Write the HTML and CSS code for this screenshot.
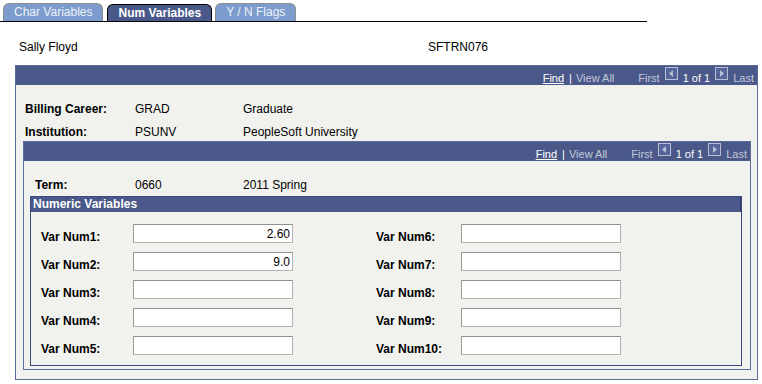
FILE: index.html
```html
<!DOCTYPE html>
<html lang="en">
<head>
    <meta charset="UTF-8">
    <title>Num Variables</title>
    <link rel="stylesheet" href="styles.css">
</head>
<body>
    <div class="tabs">
        <span class="tab">Char Variables</span>
        <span class="tab active">Num Variables</span>
        <span class="tab">Y / N Flags</span>
    </div>

    <div class="page-head">
        <span class="student">Sally Floyd</span>
        <span class="oprid">SFTRN076</span>
    </div>

    <div class="scroll outer">
        <div class="nav-bar">
            <a class="find">Find</a>
            <span class="sep">|</span>
            <span class="dim">View All</span>
            <span class="dim first">First</span>
            <svg class="arrow" width="13" height="13" viewBox="0 0 13 13">
                <rect x="0.5" y="0.5" width="12" height="12" fill="#55649a" stroke="#b9bfd3"/>
                <polygon points="8,3 8,10 4,6.5" fill="#b9bfd3"/>
            </svg>
            <span class="count">1 of 1</span>
            <svg class="arrow" width="13" height="13" viewBox="0 0 13 13">
                <rect x="0.5" y="0.5" width="12" height="12" fill="#55649a" stroke="#b9bfd3"/>
                <polygon points="5,3 5,10 9,6.5" fill="#b9bfd3"/>
            </svg>
            <span class="dim">Last</span>
        </div>

        <div class="info-row">
            <span class="label">Billing Career:</span>
            <span>GRAD</span>
            <span>Graduate</span>
        </div>
        <div class="info-row">
            <span class="label">Institution:</span>
            <span>PSUNV</span>
            <span>PeopleSoft University</span>
        </div>

        <div class="scroll inner">
            <div class="nav-bar">
                <a class="find">Find</a>
                <span class="sep">|</span>
                <span class="dim">View All</span>
                <span class="dim first">First</span>
                <svg class="arrow" width="13" height="13" viewBox="0 0 13 13">
                    <rect x="0.5" y="0.5" width="12" height="12" fill="#55649a" stroke="#b9bfd3"/>
                    <polygon points="8,3 8,10 4,6.5" fill="#b9bfd3"/>
                </svg>
                <span class="count">1 of 1</span>
                <svg class="arrow" width="13" height="13" viewBox="0 0 13 13">
                    <rect x="0.5" y="0.5" width="12" height="12" fill="#55649a" stroke="#b9bfd3"/>
                    <polygon points="5,3 5,10 9,6.5" fill="#b9bfd3"/>
                </svg>
                <span class="dim">Last</span>
            </div>

            <div class="info-row term">
                <span class="label">Term:</span>
                <span>0660</span>
                <span>2011 Spring</span>
            </div>

            <div class="group">
                <div class="group-title">Numeric Variables</div>
                <div class="num-grid">
                    <label class="label" for="num1">Var Num1:</label>
                    <input type="text" id="num1" value="2.60">
                    <label class="label" for="num6">Var Num6:</label>
                    <input type="text" id="num6">

                    <label class="label" for="num2">Var Num2:</label>
                    <input type="text" id="num2" value="9.0">
                    <label class="label" for="num7">Var Num7:</label>
                    <input type="text" id="num7">

                    <label class="label" for="num3">Var Num3:</label>
                    <input type="text" id="num3">
                    <label class="label" for="num8">Var Num8:</label>
                    <input type="text" id="num8">

                    <label class="label" for="num4">Var Num4:</label>
                    <input type="text" id="num4">
                    <label class="label" for="num9">Var Num9:</label>
                    <input type="text" id="num9">

                    <label class="label" for="num5">Var Num5:</label>
                    <input type="text" id="num5">
                    <label class="label" for="num10">Var Num10:</label>
                    <input type="text" id="num10">
                </div>
            </div>
        </div>
    </div>
</body>
</html>
```

FILE: styles.css
```css
body {
    font-family: "Liberation Sans", Arial, sans-serif;
    font-size: 12px;
    line-height: 14px;
    color: #000;
    margin: 0;
    padding: 0;
    background-color: #fff;
}

/* tab strip */
.tabs {
    display: flex;
    align-items: flex-end;
    width: 644px;
    height: 18px;
    padding: 3px 0 0 3px;
    border-bottom: 1px solid #000;
}

.tab {
    height: 17px;
    line-height: 17px;
    padding: 0 10px;
    margin-right: 4px;
    background-color: #7c9ccd;
    color: #eef2f8;
    border: 1px solid #8d8d8d;
    border-bottom: none;
    border-radius: 6px 6px 0 0;
}

.tab.active {
    height: 16px;
    line-height: 16px;
    margin-right: 3px;
    background-color: #4a598a;
    color: #fff;
    font-weight: bold;
    border-color: #000;
}

/* header line */
.page-head {
    display: flex;
    margin: 18px 0 11px;
    padding-left: 19px;
}

.page-head .student {
    width: 409px;
}

/* scroll areas */
.scroll {
    background-color: #f1f2ee;
    border: 1px solid #5d6b9b;
}

.outer {
    width: 741px;
    margin-left: 15px;
    padding-bottom: 9px;
}

.inner {
    margin: 2px 6px 0 7px;
    padding-bottom: 3px;
}

.nav-bar {
    display: flex;
    justify-content: flex-end;
    align-items: flex-start;
    height: 19px;
    padding-right: 3px;
    background-color: #4a598a;
    font-size: 11px;
}

.nav-bar span,
.nav-bar a {
    padding-top: 5px;
    line-height: 14px;
}

.nav-bar .find {
    color: #fff;
    text-decoration: underline;
}

.nav-bar .sep {
    color: #fff;
    margin: 0 4px 0 5px;
}

.nav-bar .dim {
    color: #c3c8d8;
}

.nav-bar .first {
    margin-left: 24px;
}

.nav-bar .count {
    color: #fff;
}

.nav-bar .arrow {
    margin: 1px 5px 0;
}

/* label / value rows */
.info-row {
    display: grid;
    grid-template-columns: 110px 108px auto;
    padding-left: 9px;
    margin-top: 9px;
}

.outer > .nav-bar + .info-row {
    margin-top: 17px;
}

.info-row.term {
    grid-template-columns: 100px 108px auto;
    padding-left: 11px;
    margin-top: 17px;
}

.label {
    font-weight: bold;
}

/* numeric variables group */
.group {
    margin: 4px 8px 0 6px;
    border: 1px solid #3d4b7c;
    padding-bottom: 10px;
}

.group-title {
    height: 15px;
    line-height: 15px;
    padding-left: 2px;
    background-color: #4a598a;
    border-right: 1px solid #2f3c69;
    color: #fff;
    font-weight: bold;
}

.num-grid {
    display: grid;
    grid-template-columns: 92px 160px 83px 85px 160px;
    grid-auto-rows: 19px;
    row-gap: 9px;
    padding: 12px 0 0 10px;
}

.num-grid .label {
    padding-top: 6px;
}

.num-grid label:nth-child(4n+3) {
    grid-column: 4;
}

.num-grid input {
    box-sizing: border-box;
    width: 160px;
    height: 19px;
    margin: 0;
    padding: 0 2px;
    font-family: "Liberation Sans", Arial, sans-serif;
    font-size: 12px;
    text-align: right;
    background-color: #fff;
    border: 1px solid #b3b3b3;
    border-top-color: #8e8e8e;
    border-left-color: #9a9a9a;
}
```
